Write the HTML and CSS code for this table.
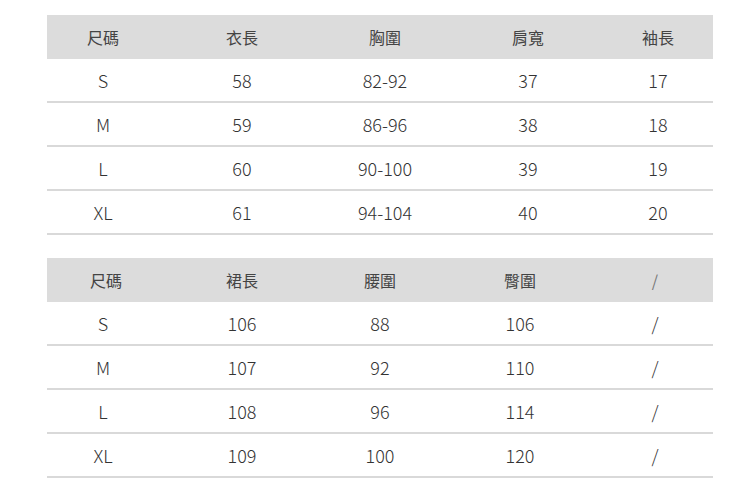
FILE: index.html
```html
<!DOCTYPE html>
<html lang="zh-Hant">
<head>
<meta charset="utf-8">
<link rel="stylesheet" href="styles.css">
</head>
<body>
<div class="page">
  <div class="table t1">
    <div class="row head"><span>尺碼</span><span>衣長</span><span>胸圍</span><span>肩寬</span><span>袖長</span></div>
    <div class="row"><span>S</span><span>58</span><span>82-92</span><span>37</span><span>17</span></div>
    <div class="row"><span>M</span><span>59</span><span>86-96</span><span>38</span><span>18</span></div>
    <div class="row"><span>L</span><span>60</span><span>90-100</span><span>39</span><span>19</span></div>
    <div class="row"><span>XL</span><span>61</span><span>94-104</span><span>40</span><span>20</span></div>
  </div>
  <div class="table t2">
    <div class="row head"><span>尺碼</span><span>裙長</span><span>腰圍</span><span>臀圍</span><span class="slash">/</span></div>
    <div class="row"><span>S</span><span>106</span><span>88</span><span>106</span><span>/</span></div>
    <div class="row"><span>M</span><span>107</span><span>92</span><span>110</span><span>/</span></div>
    <div class="row"><span>L</span><span>108</span><span>96</span><span>114</span><span>/</span></div>
    <div class="row"><span>XL</span><span>109</span><span>100</span><span>120</span><span>/</span></div>
  </div>
</div>
</body>
</html>
```

FILE: styles.css
```css
html, body {
  margin: 0;
  padding: 0;
  background: #ffffff;
}
.page {
  padding: 15px 0 0 47px;
  width: 666px;
  display: flex;
  flex-direction: column;
  gap: 23px;
  font-family: "Noto Sans CJK TC", "Noto Sans", sans-serif;
  font-size: 18px;
  font-weight: 300;
  color: #333333;
}
.table {
  display: flex;
  flex-direction: column;
}
.row {
  display: grid;
  height: 42px;
  border-bottom: 2px solid #d9d9d9;
  align-items: center;
  text-align: center;
  line-height: 1;
  padding-bottom: 1px;
  box-sizing: content-box;
}
.row:not(.head) {
  height: 41px;
}
.t1 .row {
  grid-template-columns: 112px 166px 120px 166px 102px;
}
.t2 .row {
  grid-template-columns: 112px 166px 110px 170px 108px;
}
.row.head {
  height: 44px;
  padding-bottom: 0;
  border-bottom: none;
  background: #dcdcdc;
  font-size: 16px;
  font-weight: 400;
  color: #444444;
}
.row span:last-child {
  padding-right: 8px;
}
.t2 .row.head span:first-child {
  padding-left: 6px;
}
.slash {
  color: #777777;
}
```
